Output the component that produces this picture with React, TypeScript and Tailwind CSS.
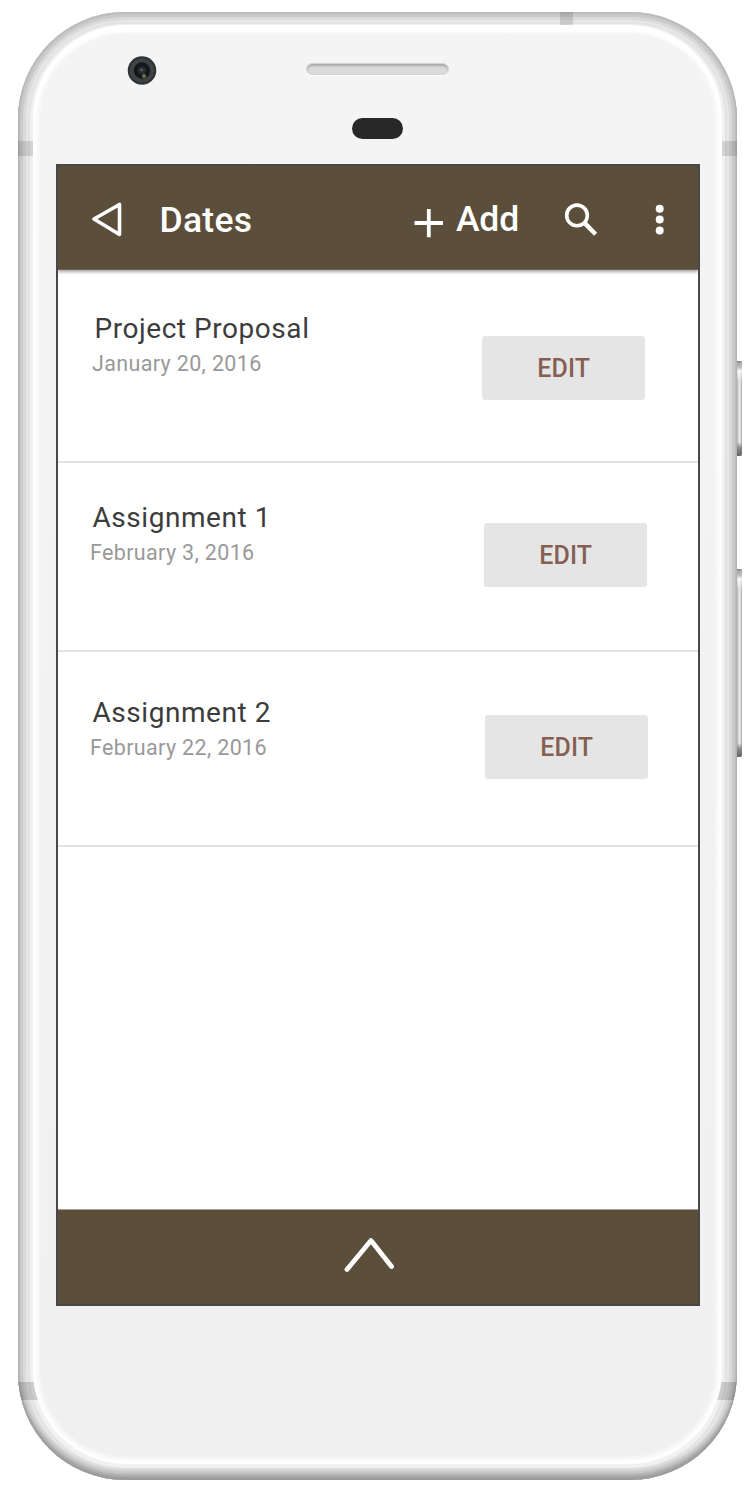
type DateItem = {
  title: string;
  date: string;
  row: string;
  text: string;
  button: string;
};

const items: DateItem[] = [
  {
    title: "Project Proposal",
    date: "January 20, 2016",
    row: "h-[193px] pr-[53px]",
    text: "pt-[41px] pl-[34px]",
    button: "mt-[66px]",
  },
  {
    title: "Assignment 1",
    date: "February 3, 2016",
    row: "h-[189px] pr-[51px]",
    text: "pt-[37px] pl-[32px]",
    button: "mt-[60px]",
  },
  {
    title: "Assignment 2",
    date: "February 22, 2016",
    row: "h-[195px] pr-[50px]",
    text: "pt-[43px] pl-[32px]",
    button: "mt-[63px]",
  },
];

function SideButton({ className }: { className: string }) {
  return (
    <div
      className={`absolute left-[736px] w-[6px] rounded-r-[2px] bg-[linear-gradient(to_right,#aaaaaa_0,#c4c4c4_2px,#eeeeee_3px,#d5d5d5_5px,#9c9c9c_6px)] ${className}`}
    >
      <div className="h-full w-full rounded-r-[2px] bg-[linear-gradient(to_bottom,#777777_0,#aaaaaa_2px,#bbbbbb_6px,#ffffffcc_10px,#ffffff00_20px,#ffffff00_calc(100%-14px),#888888_calc(100%-8px),#666666_100%)]" />
    </div>
  );
}

function Header() {
  return (
    <header className="relative flex h-[104px] shrink-0 items-start border-b border-[#6b614b] bg-[#5b4e3a] text-[35.5px] leading-[42px] font-medium text-white shadow-[0_2px_3px_rgba(0,0,0,0.35)]">
      <svg className="mt-[34px] ml-[32px] h-[40px] w-[36px]" viewBox="0 0 36 40" fill="none">
        <path d="M4 19 L29.5 4.5 V34.5 Z" stroke="white" strokeWidth="3.6" strokeLinejoin="round" />
      </svg>
      <h1 className="mt-[33px] ml-[33.5px] w-[252.5px] tracking-[0.25px]">Dates</h1>
      <button className="mt-[32px] flex w-[152px]">
        <svg className="mt-[9px] h-[32px] w-[32px]" viewBox="0 0 32 32" fill="none">
          <path d="M2.5 16H31M16.8 2V30.3" stroke="white" strokeWidth="3.8" />
        </svg>
        <span className="ml-[12px] tracking-[-0.2px]">Add</span>
      </button>
      <svg className="mt-[37px] h-[34px] w-[34px]" viewBox="0 0 34 34" fill="none">
        <circle cx="13" cy="12.4" r="10.3" stroke="white" strokeWidth="3.6" />
        <path d="M20.7 20.1 L31.6 31.2" stroke="white" strokeWidth="4.4" />
      </svg>
      <svg className="mt-[36px] ml-[57px] h-[34px] w-[10px]" viewBox="0 0 10 34" fill="white">
        <circle cx="4.7" cy="6.7" r="4" />
        <circle cx="4.7" cy="17.5" r="4" />
        <circle cx="4.7" cy="28.5" r="4" />
      </svg>
    </header>
  );
}

function Row({ item }: { item: DateItem }) {
  return (
    <li className={`flex items-start justify-between border-b-2 border-[#e1e1e1] ${item.row}`}>
      <div className={item.text}>
        <h2 className="pl-[2.5px] text-[28px] leading-[36px] tracking-[0.55px] text-[#3c3c3c]">
          {item.title}
        </h2>
        <p className="text-[21.5px] leading-[34px] tracking-[0.35px] text-[#999999]">{item.date}</p>
      </div>
      <button
        className={`h-[64px] w-[163.5px] rounded-[3px] bg-[#e5e5e5] pl-[1px] text-[25px] leading-[65px] font-medium tracking-[0.1px] text-[#865f53] ${item.button}`}
      >
        EDIT
      </button>
    </li>
  );
}

export default function App() {
  return (
    <main className="relative h-[1498px] w-[756px] bg-white pt-[12px] pl-[18px] font-[Roboto,sans-serif]">
      <SideButton className="top-[361px] h-[95px]" />
      <SideButton className="top-[569px] h-[188px]" />

      <div className="relative h-[1468px] w-[718.5px] overflow-hidden rounded-[107px] bg-[#f6f6f6] pt-[13px] pl-[15px] shadow-[inset_0_-3px_2px_#9c9c9c,inset_0_-6px_2px_#b0b0b0,inset_0_-10px_3px_#c8c8c8,inset_0_0_1px_2px_#bcbcbc,inset_0_0_1px_5px_#cacaca,inset_0_0_1px_8px_#dadada,inset_0_0_1px_10px_#e8e8e8,inset_0_0_1px_12px_#e2e2e2,inset_0_0_0_16px_#f1f1f1]">
        <div className="absolute top-[129px] left-0 h-[15px] w-full bg-black/12" />
        <div className="absolute top-0 left-[542px] h-[13px] w-[13px] bg-black/12" />
        <div className="absolute top-[1370px] left-0 h-[18px] w-full bg-black/15" />

        <div className="relative flex h-[1439px] w-[689px] flex-col rounded-[94px] bg-[linear-gradient(#f4f4f4,#f0f0f0)] shadow-[inset_0_0_5px_5px_#ffffff,inset_0_7px_3px_#ffffff]">
          <div className="flex h-[139px] shrink-0">
            <svg className="mt-[30px] ml-[93px] h-[32px] w-[32px]" viewBox="0 0 32 32">
              <circle cx="16" cy="15.5" r="15" fill="#fafafa" />
              <circle cx="16" cy="15.5" r="14.3" fill="#303335" />
              <circle cx="16" cy="15.5" r="12" fill="#404345" />
              <circle cx="16" cy="15.5" r="8.3" fill="#15171a" />
              <circle cx="16" cy="15.5" r="4" fill="#292c32" />
              <circle cx="15.5" cy="15" r="1.2" fill="#526980" />
              <circle cx="18" cy="21" r="2" fill="#6f743b" />
            </svg>
            <div className="ml-[148px] flex w-[143px] flex-col items-center">
              <div className="mt-[38px] h-[12px] w-[143px] rounded-full border border-[#d3d3d3] bg-[#dadada] shadow-[inset_0_2px_2px_#aaaaaa,0_1px_1px_#ffffff]" />
              <div className="mt-[43px] h-[21px] w-[51px] rounded-full bg-[#282828]" />
            </div>
          </div>

          <section className="ml-[23px] flex h-[1142px] w-[644px] flex-col overflow-hidden border-2 border-[#48484a] bg-white">
            <Header />
            <ul className="grow">
              {items.map((item) => (
                <Row key={item.title} item={item} />
              ))}
            </ul>
            <footer className="h-[95px] border-t border-[#aaa397] bg-[#5b4e3a]">
              <svg className="mt-[21.5px] ml-[282px] h-[44px] w-[60px]" viewBox="0 0 60 44" fill="none">
                <path
                  d="M7 37.5 L31 8.5 L51.5 34.5"
                  stroke="white"
                  strokeWidth="4.8"
                  strokeLinecap="round"
                  strokeLinejoin="round"
                />
              </svg>
            </footer>
          </section>
        </div>
      </div>
    </main>
  );
}
